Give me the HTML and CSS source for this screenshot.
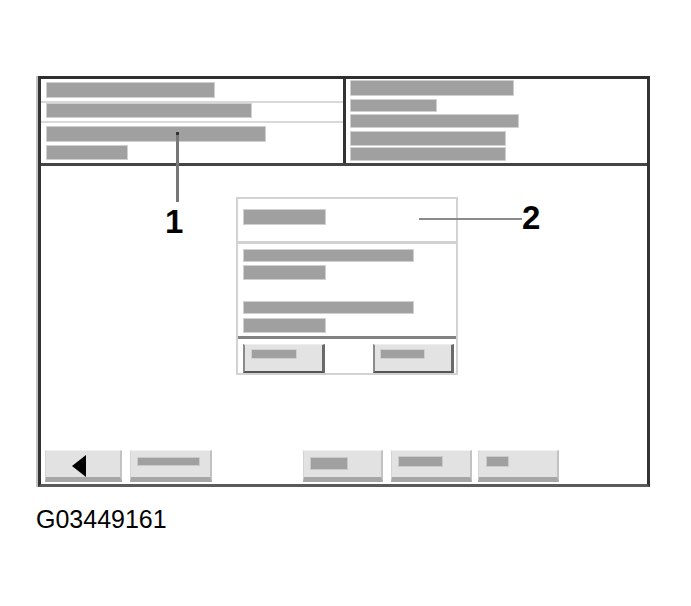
FILE: index.html
```html
<!DOCTYPE html>
<html>
<head>
<meta charset="utf-8">
<link rel="stylesheet" href="styles.css">
</head>
<body>
<div class="frame">
  <div class="header">
    <div class="panel-left">
      <div class="bar b1"></div>
      <div class="sep s1"></div>
      <div class="bar b2"></div>
      <div class="sep s2"></div>
      <div class="bar b3"></div>
      <div class="bar b4"></div>
    </div>
    <div class="panel-right">
      <div class="bar r1"></div>
      <div class="bar r2"></div>
      <div class="bar r3"></div>
      <div class="bar r4"></div>
      <div class="bar r5"></div>
    </div>
  </div>
  <div class="main">
    <div class="dialog">
      <div class="dlg-title"><div class="bar t1"></div></div>
      <div class="dlg-body">
        <div class="bar c1"></div>
        <div class="bar c2"></div>
        <div class="bar c3"></div>
        <div class="bar c4"></div>
      </div>
      <div class="dlg-foot">
        <div class="dbtn"><div class="bar d1"></div></div>
        <div class="dbtn dbtn2"><div class="bar d2"></div></div>
      </div>
    </div>
    <div class="toolbar">
      <div class="tbtn back"><svg class="arrow" width="14" height="22" viewBox="0 0 14 22"><polygon points="14,0 0,11 14,22" fill="#000"/></svg></div>
      <div class="tbtn t2"><div class="bar k2"></div></div>
      <div class="tbtn t3"><div class="bar k3"></div></div>
      <div class="tbtn t4"><div class="bar k4"></div></div>
      <div class="tbtn t5"><div class="bar k5"></div></div>
    </div>
  </div>
  <div class="leader leader1"></div>
  <div class="callout callout1">1</div>
  <div class="leader leader2"></div>
  <div class="callout callout2">2</div>
</div>
<div class="caption">G03449161</div>
</body>
</html>
```
FILE: styles.css
```css
html, body {
  margin: 0;
  padding: 0;
  background: #fff;
}
body {
  width: 691px;
  height: 606px;
  overflow: hidden;
  font-family: "Liberation Sans", Arial, sans-serif;
}
.frame {
  position: relative;
  box-sizing: border-box;
  width: 612px;
  height: 411px;
  margin: 76px 0 0 38px;
  border-top: 3px solid #2e2e2e;
  border-left: 3px solid #333;
  border-right: 3px solid #333;
  border-bottom: 3px solid #5a5a5a;
  box-shadow: -2px 0 0 #c4c4c4;
  display: flex;
  flex-direction: column;
}
.header {
  display: flex;
  height: 84px;
  border-bottom: 3px solid #444;
  flex: none;
}
.panel-left {
  width: 302px;
  border-right: 3px solid #333;
  display: flex;
  flex-direction: column;
  padding-top: 4px;
  box-sizing: content-box;
}
.panel-right {
  flex: 1;
  display: flex;
  flex-direction: column;
  padding: 2px 0 0 5px;
}
.bar {
  background: #a0a0a0;
  box-shadow: 0 0 0 1px #d0d0d0;
  flex: none;
}
.panel-left .bar { margin-left: 6px; }
.sep {
  height: 2px;
  background: #d9d9d9;
  flex: none;
}
.b1 { width: 167px; height: 14px; }
.s1 { margin-top: 4px; }
.b2 { width: 204px; height: 13px; margin-top: 1px; }
.s2 { margin-top: 4px; }
.b3 { width: 218px; height: 14px; margin-top: 4px; }
.b4 { width: 80px; height: 13px; margin-top: 5px; }
.r1 { width: 162px; height: 14px; }
.r2 { width: 85px; height: 11px; margin-top: 5px; }
.r3 { width: 167px; height: 12px; margin-top: 4px; }
.r4 { width: 154px; height: 13px; margin-top: 5px; }
.r5 { width: 154px; height: 12px; margin-top: 3px; }

.main {
  flex: 1;
  display: flex;
  flex-direction: column;
}
.dialog {
  box-sizing: border-box;
  width: 222px;
  margin: 31px 0 0 195px;
  border: 2px solid #d2d2d2;
  display: flex;
  flex-direction: column;
}
.dlg-title {
  height: 31px;
  padding: 11px 0 0 6px;
  border-bottom: 3px solid #d2d2d2;
}
.t1 { width: 81px; height: 14px; }
.dlg-body {
  display: flex;
  flex-direction: column;
  padding: 6px 0 4px 6px;
}
.c1 { width: 169px; height: 11px; }
.c2 { width: 81px; height: 13px; margin-top: 5px; }
.c3 { width: 169px; height: 11px; margin-top: 23px; }
.c4 { width: 81px; height: 13px; margin-top: 6px; }
.dlg-foot {
  border-top: 3px solid #828282;
  display: flex;
  justify-content: space-between;
  padding: 5px 2px 0 5px;
}
.dbtn {
  box-sizing: border-box;
  width: 82px;
  height: 29px;
  background: #e3e3e3;
  border-top: 1px solid #eeeeee;
  border-left: 2px solid #8a8a8a;
  border-right: 3px solid #6a6a6a;
  border-bottom: 2px solid #555;
  padding: 5px 0 0 7px;
}
.dbtn2 { width: 81px; padding-left: 6px; }
.d1 { width: 44px; height: 8px; }
.d2 { width: 43px; height: 8px; }

.toolbar {
  margin-top: auto;
  display: flex;
  padding: 0 0 2px 4px;
}
.tbtn {
  box-sizing: border-box;
  height: 32px;
  width: 81px;
  background: #e2e2e2;
  border-top: 1px solid #f2f2f2;
  border-left: 1px solid #d4d4d4;
  border-right: 2px solid #c2c2c2;
  border-bottom: 5px solid #a6a6a6;
  padding: 6px 0 0 7px;
}
.back {
  width: 77px;
  padding: 4px 0 0 26px;
}
.arrow { display: block; }
.t2 { width: 82px; margin-left: 8px; }
.t3 { width: 80px; margin-left: 91px; }
.t4 { margin-left: 8px; }
.t5 { margin-left: 6px; }
.tbtn .bar { box-shadow: 0 0 0 1px #cacaca; }
.k2 { width: 61px; height: 7px; margin-top: 1px; }
.k3 { width: 36px; height: 11px; margin-top: 1px; }
.k4 { width: 43px; height: 9px; }
.k5 { width: 21px; height: 9px; margin-left: 1px; }

.leader {
  position: absolute;
  background: #777;
}
.leader1 {
  left: 135px;
  top: 53px;
  width: 3px;
  height: 70px;
  border-top: 3px solid #333;
  box-sizing: border-box;
}
.leader2 {
  left: 378px;
  top: 139px;
  width: 103px;
  height: 2px;
  background: #8a8a8a;
}
.callout {
  position: absolute;
  font-weight: bold;
  font-size: 33px;
  line-height: 33px;
  color: #000;
}
.callout1 { left: 124px; top: 126px; }
.callout2 { left: 481px; top: 122px; }

.caption {
  margin: 20px 0 0 36px;
  font-size: 25px;
  line-height: 25px;
  color: #000;
}
```
